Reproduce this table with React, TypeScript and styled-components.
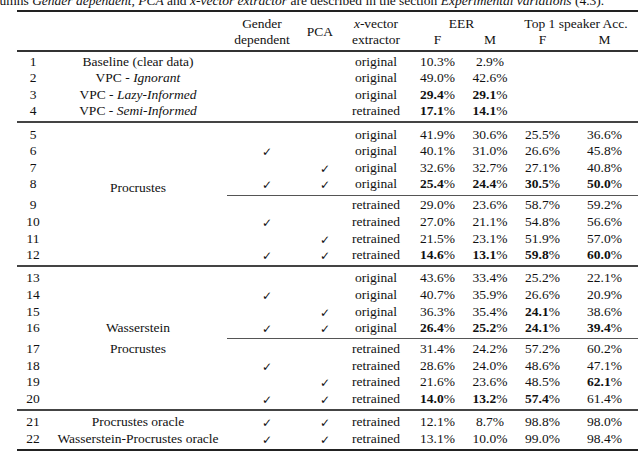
import React from "react";
import styled, { createGlobalStyle, css } from "styled-components";

const GlobalStyle = createGlobalStyle`
  html, body {
    margin: 0;
    padding: 0;
    background: #fff;
  }
  body {
    font-family: "Liberation Serif", "Times New Roman", serif;
    color: #111;
    overflow: hidden;
  }
`;

type RowKind = "top" | "plain" | "mid" | "cmid" | "endMid" | "endCmid" | "end";

type Row = {
  n: number;
  method?: React.ReactNode;
  span?: number;
  g?: boolean;
  p?: boolean;
  x: string;
  v: string[];
  kind: RowKind;
};

// "*" in front of a value marks it bold, as in the paper
const rows: Row[] = [
  { n: 1, method: "Baseline (clear data)", x: "original", v: ["10.3", "2.9", "", ""], kind: "top" },
  { n: 2, method: <>VPC - <i>Ignorant</i></>, x: "original", v: ["49.0", "42.6", "", ""], kind: "plain" },
  { n: 3, method: <>VPC - <i>Lazy-Informed</i></>, x: "original", v: ["*29.4", "*29.1", "", ""], kind: "plain" },
  { n: 4, method: <>VPC - <i>Semi-Informed</i></>, x: "retrained", v: ["*17.1", "*14.1", "", ""], kind: "endMid" },

  { n: 5, method: "Procrustes", span: 8, x: "original", v: ["41.9", "30.6", "25.5", "36.6"], kind: "mid" },
  { n: 6, g: true, x: "original", v: ["40.1", "31.0", "26.6", "45.8"], kind: "plain" },
  { n: 7, p: true, x: "original", v: ["32.6", "32.7", "27.1", "40.8"], kind: "plain" },
  { n: 8, g: true, p: true, x: "original", v: ["*25.4", "*24.4", "*30.5", "*50.0"], kind: "endCmid" },
  { n: 9, x: "retrained", v: ["29.0", "23.6", "58.7", "59.2"], kind: "cmid" },
  { n: 10, g: true, x: "retrained", v: ["27.0", "21.1", "54.8", "56.6"], kind: "plain" },
  { n: 11, p: true, x: "retrained", v: ["21.5", "23.1", "51.9", "57.0"], kind: "plain" },
  { n: 12, g: true, p: true, x: "retrained", v: ["*14.6", "*13.1", "*59.8", "*60.0"], kind: "endMid" },

  { n: 13, method: "", x: "original", v: ["43.6", "33.4", "25.2", "22.1"], kind: "mid" },
  { n: 14, method: "", g: true, x: "original", v: ["40.7", "35.9", "26.6", "20.9"], kind: "plain" },
  { n: 15, method: "", p: true, x: "original", v: ["36.3", "35.4", "*24.1", "38.6"], kind: "plain" },
  { n: 16, method: "Wasserstein", g: true, p: true, x: "original", v: ["*26.4", "*25.2", "*24.1", "*39.4"], kind: "endCmid" },
  { n: 17, method: "Procrustes", x: "retrained", v: ["31.4", "24.2", "57.2", "60.2"], kind: "cmid" },
  { n: 18, method: "", g: true, x: "retrained", v: ["28.6", "24.0", "48.6", "47.1"], kind: "plain" },
  { n: 19, method: "", p: true, x: "retrained", v: ["21.6", "23.6", "48.5", "*62.1"], kind: "plain" },
  { n: 20, method: "", g: true, p: true, x: "retrained", v: ["*14.0", "*13.2", "*57.4", "61.4"], kind: "endMid" },

  { n: 21, method: "Procrustes oracle", g: true, p: true, x: "retrained", v: ["12.1", "8.7", "98.8", "98.0"], kind: "mid" },
  { n: 22, method: "Wasserstein-Procrustes oracle", g: true, p: true, x: "retrained", v: ["13.1", "10.0", "99.0", "98.4"], kind: "end" },
];

const widths = [32, 178, 70, 46, 66, 57, 48, 57, 67];

const Value = ({ raw }: { raw: string }) => {
  if (!raw) return null;
  const bold = raw.startsWith("*");
  return (
    <>
      {bold ? <Strong>{raw.slice(1)}</Strong> : raw}%
    </>
  );
};

const App = () => {
  return (
    <Page>
      <GlobalStyle />
      <Caption>
        columns <i>Gender dependent</i>, <i>PCA</i> and <i>x-vector extractor</i> are
        described in the section <i>Experimental variations</i> (4.3).
      </Caption>
      <Table>
        <colgroup>
          {widths.map((w, i) => (
            <Col key={i} $w={w} />
          ))}
        </colgroup>
        <thead>
          <HeadTop>
            <Th rowSpan={2} />
            <Th rowSpan={2} />
            <Th rowSpan={2}>
              Gender
              <br />
              dependent
            </Th>
            <Th rowSpan={2}>PCA</Th>
            <Th rowSpan={2}>
              <MathX>x</MathX>-vector
              <br />
              extractor
            </Th>
            <Th colSpan={2}>EER</Th>
            <Th colSpan={2}>Top 1 speaker Acc.</Th>
          </HeadTop>
          <HeadBottom>
            <Th>F</Th>
            <Th>M</Th>
            <Th>F</Th>
            <Th>M</Th>
          </HeadBottom>
        </thead>
        <tbody>
          {rows.map((r) => {
            const clear = r.kind === "cmid";
            return (
              <BodyRow key={r.n} $kind={r.kind}>
                <Td $clear={clear}>{r.n}</Td>
                {r.method !== undefined && (
                  <Td $clear={clear} rowSpan={r.span} $lift={r.span ? 16 : 0}>
                    {r.method}
                  </Td>
                )}
                <Td>{r.g && <Check>✓</Check>}</Td>
                <Td>{r.p && <Check>✓</Check>}</Td>
                <Td>{r.x}</Td>
                {r.v.map((val, i) => (
                  <Td key={i}>
                    <Value raw={val} />
                  </Td>
                ))}
              </BodyRow>
            );
          })}
        </tbody>
      </Table>
    </Page>
  );
};

export default App;

// ===== Styled Components ===== //

const Page = styled.div`
  width: 640px;
  height: 453px;
  overflow: hidden;
  font-size: 13.5px;
`;

const Caption = styled.div`
  margin: -7px 0 0 -17px;
  line-height: 16px;
  white-space: nowrap;
`;

const Table = styled.table`
  margin: 1px 0 0 17px;
  width: 621px;
  table-layout: fixed;
  border-collapse: separate;
  border-spacing: 0;
  font-size: 13.5px;
`;

const Col = styled.col<{ $w: number }>`
  width: ${(p) => p.$w}px;
`;

const Th = styled.th`
  font-weight: normal;
  text-align: center;
  vertical-align: middle;
  line-height: 16px;
  padding: 0;
  white-space: nowrap;
`;

const HeadTop = styled.tr`
  th {
    border-top: 2px solid #222;
    padding-top: 4px;
  }
  th[rowspan] {
    border-bottom: 2px solid #333;
    padding-bottom: 2px;
  }
`;

const HeadBottom = styled.tr`
  th {
    border-bottom: 2px solid #333;
    padding-bottom: 2px;
  }
`;

const rowStyles: Record<RowKind, ReturnType<typeof css>> = {
  top: css`
    padding-top: 1.7px;
  `,
  plain: css``,
  mid: css`
    border-top: 2px solid #444;
    padding-top: 3.2px;
  `,
  cmid: css`
    border-top: 1px solid #555;
    padding-top: 1.7px;
  `,
  endMid: css`
    padding-bottom: 1.4px;
  `,
  endCmid: css`
    padding-bottom: 1.7px;
  `,
  end: css`
    padding-bottom: 1.5px;
    border-bottom: 2px solid #222;
  `,
};

const BodyRow = styled.tr<{ $kind: RowKind }>`
  td {
    ${(p) => rowStyles[p.$kind]}
  }
`;

const Td = styled.td<{ $clear?: boolean; $lift?: number }>`
  text-align: center;
  vertical-align: middle;
  line-height: 16.6px;
  padding: 0;
  white-space: nowrap;

  ${(p) =>
    p.$clear &&
    css`
      && {
        border-top-color: transparent;
      }
    `}

  ${(p) =>
    p.$lift
      ? css`
          && {
            padding-bottom: ${p.$lift}px;
          }
        `
      : ""}
`;

const Strong = styled.b`
  font-weight: bold;
`;

const MathX = styled.i`
  font-style: italic;
`;

const Check = styled.span`
  display: inline-block;
  font-family: "DejaVu Sans", sans-serif;
  font-size: 12px;
  line-height: 12px;
  height: 12px;
  padding-left: 10px;
  vertical-align: -1px;
`;
